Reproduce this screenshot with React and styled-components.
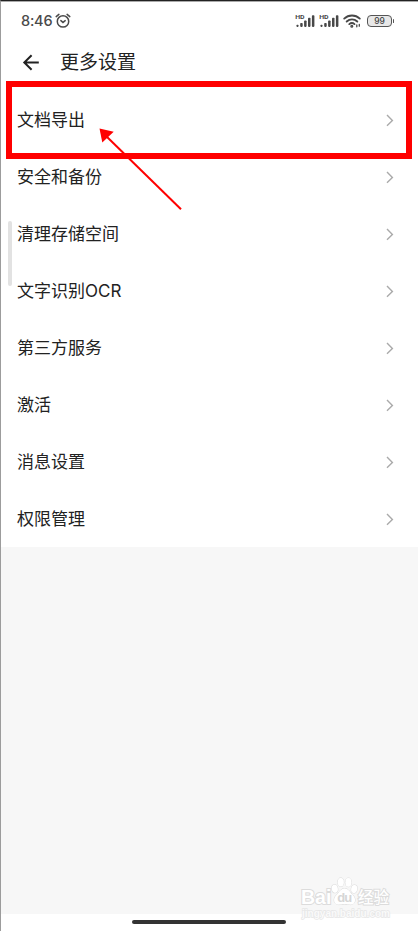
import React from 'react'
import styled, { createGlobalStyle } from 'styled-components';

const settings = [
    '文档导出',
    '安全和备份',
    '清理存储空间',
    '文字识别OCR',
    '第三方服务',
    '激活',
    '消息设置',
    '权限管理',
];

const AlarmIcon = () => (
    <svg width="16" height="16" viewBox="0 0 16 16" fill="none" stroke="#4a4a4a" strokeWidth="1.5" strokeLinecap="round">
        <circle cx="8" cy="8.4" r="5.7" />
        <path d="M1.2 3.6 3.9 1.4M14.8 3.6 12.1 1.4M5.9 7.6 8 9.4l2.2-1.8" />
    </svg>
)

const SignalIcon = () => (
    <svg width="20" height="15" viewBox="0 0 20 15" fill="#484848">
        <text x="0.2" y="4.8" fontSize="6" fontWeight="700" fontFamily="Roboto, sans-serif" textLength="9.4" lengthAdjust="spacingAndGlyphs">HD</text>
        <rect x="1.4" y="10.7" width="2.2" height="2.2" rx=".8" />
        <rect x="5.2" y="8.9" width="2.5" height="4" rx=".8" />
        <rect x="9.1" y="6.4" width="2.5" height="6.5" rx=".8" />
        <rect x="13" y="3.8" width="2.5" height="9.1" rx=".8" />
        <rect x="16.9" y="1.2" width="2.5" height="11.7" rx=".8" />
    </svg>
)

const WifiIcon = () => (
    <svg width="18" height="14" viewBox="0 0 18 14" fill="none" stroke="#484848" strokeWidth="1.9" strokeLinecap="round">
        <path d="M1.2 4.6c4.4-4.2 11.2-4.2 15.6 0M3.7 7.5c3.1-2.8 7.5-2.8 10.6 0M6.3 10.1c1.6-1.4 3.6-1.4 5.2 0" />
        <circle cx="8.8" cy="12.2" r=".6" fill="#484848" />
        <path d="M13.8 11v1.8M16.3 10.4v1.8" strokeWidth="1.3" />
    </svg>
)

const BackIcon = () => (
    <svg width="17" height="17" viewBox="0 0 17 17" fill="none" stroke="#222" strokeWidth="2">
        <path d="M15.8 8.5H1.5M8.6 1.2 1.3 8.5l7.3 7.3" />
    </svg>
)

const ChevronIcon = () => (
    <svg width="8" height="12" viewBox="0 0 8 12" fill="none" stroke="#aaa" strokeWidth="1.4">
        <path d="M1 1.1 6.4 6.4 1 11.7" />
    </svg>
)

const PawIcon = () => (
    <svg width="28" height="29" viewBox="0 0 28 29" fill="#fff" stroke="#dcdcdc" strokeWidth="1">
        <ellipse cx="3.8" cy="11.8" rx="3" ry="4" transform="rotate(-10 3.8 11.8)" />
        <ellipse cx="9.8" cy="5.2" rx="3" ry="4.3" />
        <ellipse cx="17.4" cy="5.4" rx="3" ry="4.3" />
        <ellipse cx="23.2" cy="12" rx="3" ry="4" transform="rotate(10 23.2 12)" />
        <path d="M13.6 11.5c-4.2 0-5.2 4-8 6.4-4 3.5-3 9.7 2 9.7 2.3 0 3.5-.5 6-.5s3.7.5 6 .5c5 0 6-6.2 2-9.7-2.8-2.4-3.8-6.4-8-6.4z" />
        <text x="6.2" y="25.2" fontSize="13" fontWeight="700" fontFamily="Liberation Sans, sans-serif" fill="#d6d6d6" stroke="none" textLength="15">du</text>
    </svg>
)

const App = () => {
  return (
    <>
        <GlobalStyle />
        <Screen>
            <StatusBar>
                <Clock>8:46</Clock>
                <AlarmIcon />
                <StatusIcons>
                    <SignalIcon />
                    <SignalIcon />
                    <WifiIcon />
                    <Battery><span>99</span></Battery>
                </StatusIcons>
            </StatusBar>
            <Header>
                <BackIcon />
                <h1>更多设置</h1>
            </Header>
            <List>
                {settings.map((name) => (
                    <Row key={name}>
                        <span>{name}</span>
                        <ChevronIcon />
                    </Row>
                ))}
            </List>
            <Filler />
            <HomeBar><div /></HomeBar>

            <ScrollThumb />
            <Highlight />
            <Pointer width="100" height="100" viewBox="0 0 100 100">
                <path d="M91 89.2 14 14" stroke="#f00" strokeWidth="2" />
                <path d="M9.5 8.5 23.7 11.8 12.3 22.6z" fill="#f00" />
            </Pointer>
            <Watermark>
                <Brand>
                    <Latin>Bai</Latin>
                    <PawIcon />
                    <Hanzi>经验</Hanzi>
                </Brand>
                <Site viewBox="0 0 92 16" width="92" height="16">
                    <text x="1" y="10.5" textLength="88" lengthAdjust="spacingAndGlyphs">jingyan.baidu.com</text>
                </Site>
            </Watermark>
        </Screen>
    </>
  )
}

export default App

const GlobalStyle = createGlobalStyle`
    *{
        box-sizing: border-box;
    }
    body{
        margin: 0;
        background-color: #fff;
        font-family: "Noto Sans CJK SC", sans-serif;
    }
`;

const Screen = styled.div`
    display: flex;
    flex-direction: column;
    width: 418px;
    height: 931px;
    position: relative;
    overflow: hidden;
    background-color: #fff;
    border-top: 1px solid #222;
    border-left: 1px solid #9c9c9c;
    box-shadow: inset 0 1px 0 #aaa;

    svg{
        display: block;
        flex-shrink: 0;
        overflow: visible;
    }
`;

const StatusBar = styled.div`
    display: flex;
    align-items: center;
    height: 40px;
    padding: 0 24px 0 20px;
`;

const Clock = styled.span`
    width: 34px;
    font-family: Inter, sans-serif;
    font-size: 14.5px;
    font-weight: 500;
    line-height: 20px;
    letter-spacing: -0.2px;
    color: #4a4a4a;
`;

const StatusIcons = styled.div`
    display: flex;
    align-items: center;
    gap: 4px;
    margin-left: auto;
`;

const Battery = styled.div`
    display: flex;
    align-items: center;
    justify-content: center;
    width: 25px;
    height: 12px;
    margin: 0 2px 0 2px;
    position: relative;
    border: 1.5px solid #555;
    border-radius: 4px;
    background-color: #e8e8e8;
    font-family: Inter, sans-serif;
    font-size: 8.5px;
    font-weight: 500;
    line-height: 9px;
    color: #444;

    &::after{
        content: '';
        position: absolute;
        right: -3px;
        top: 3px;
        width: 1.5px;
        height: 4px;
        border-radius: 1px;
        background-color: #555;
    }
`;

const Header = styled.header`
    display: flex;
    align-items: center;
    gap: 20px;
    height: 50px;
    padding: 0 22px;
    padding-bottom: 7px;

    h1{
        margin: 0;
        padding-bottom: 3px;
        font-size: 19px;
        font-weight: 400;
        line-height: 28px;
        color: #222;
    }
`;

const List = styled.div`
    display: flex;
    flex-direction: column;
`;

const Row = styled.div`
    display: flex;
    align-items: center;
    justify-content: space-between;
    height: 57px;
    padding: 0 24px 0 16px;
    font-family: Inter, "Noto Sans CJK SC", sans-serif;
    font-size: 17px;
    line-height: 24px;
    color: #222;
`;

const Filler = styled.div`
    flex: 1;
    background-color: #f7f7f7;
`;

const HomeBar = styled.div`
    display: flex;
    justify-content: center;
    height: 17px;
    padding: 6px 1px 0 0;

    div{
        width: 154px;
        height: 4px;
        border-radius: 2px;
        background-color: #333;
    }
`;

const ScrollThumb = styled.div`
    position: absolute;
    left: 7px;
    top: 220px;
    width: 4px;
    height: 65px;
    border-radius: 2px;
    background-color: #e2e2e2;
`;

const Highlight = styled.div`
    position: absolute;
    left: 5px;
    top: 80px;
    width: 406px;
    height: 78px;
    border: 6px solid #f00;
`;

const Pointer = styled.svg`
    position: absolute;
    left: 89px;
    top: 119px;
`;

const Watermark = styled.div`
    position: absolute;
    left: 300px;
    top: 876px;
    width: 92px;
`;

const Brand = styled.div`
    display: flex;
    align-items: flex-end;
    height: 29px;
    color: #fff;
    -webkit-text-stroke: 2px #dcdcdc;
    paint-order: stroke fill;
`;

const Latin = styled.span`
    width: 30px;
    font-family: "Liberation Sans", sans-serif;
    font-size: 19.5px;
    font-weight: 700;
    line-height: 18px;
`;

const Hanzi = styled.span`
    margin-left: -1px;
    font-size: 15.5px;
    font-weight: 500;
    line-height: 20px;
    white-space: nowrap;
`;

const Site = styled.svg`
    font-family: "Liberation Sans", sans-serif;
    font-size: 10.5px;
    font-weight: 700;
    fill: #fafafa;
    stroke: #e6e6e6;
    stroke-width: 1.4px;
    paint-order: stroke;
`;
